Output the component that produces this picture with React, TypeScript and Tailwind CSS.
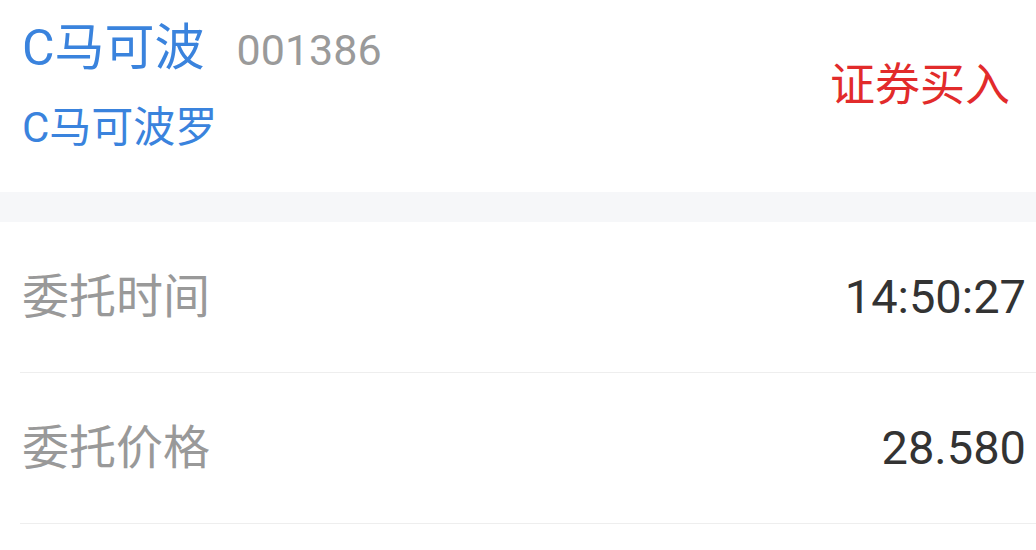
const font = "font-['Roboto','Noto_Sans_CJK_SC',sans-serif]";

const rows = [
  { label: "委托时间", value: "14:50:27" },
  { label: "委托价格", value: "28.580" },
];

export default function App() {
  return (
    <div className={`w-[1036px] h-[550px] bg-white overflow-hidden ${font}`}>
      <div className="h-[192px] flex justify-between pl-[22px] pr-[26px]">
        <div className="flex flex-col pt-[20px]">
          <div className="flex items-baseline gap-[32px] h-[56px]">
            <span className="text-[50px] leading-[56px] text-[#3a83dd]">C马可波</span>
            <span className="text-[43px] leading-[56px] text-[#9a9a9a]">001386</span>
          </div>
          <span className="mt-[27px] text-[42px] leading-[50px] text-[#3a83dd]">C马可波罗</span>
        </div>
        <div className="pt-[61px]">
          <span className="text-[45px] leading-[50px] text-[#e22b2b]">证券买入</span>
        </div>
      </div>
      <div className="h-[30px] bg-[#f6f7f9]" />
      <div className="pl-[20px]">
        {rows.map((r) => (
          <div key={r.label} className="h-[151px] flex items-center justify-between border-b border-[#eeeeee] pr-[10px]">
            <span className="pl-[2px] text-[47px] text-[#999999]">{r.label}</span>
            <span className="text-[47px] text-[#333333]">{r.value}</span>
          </div>
        ))}
      </div>
    </div>
  );
}
